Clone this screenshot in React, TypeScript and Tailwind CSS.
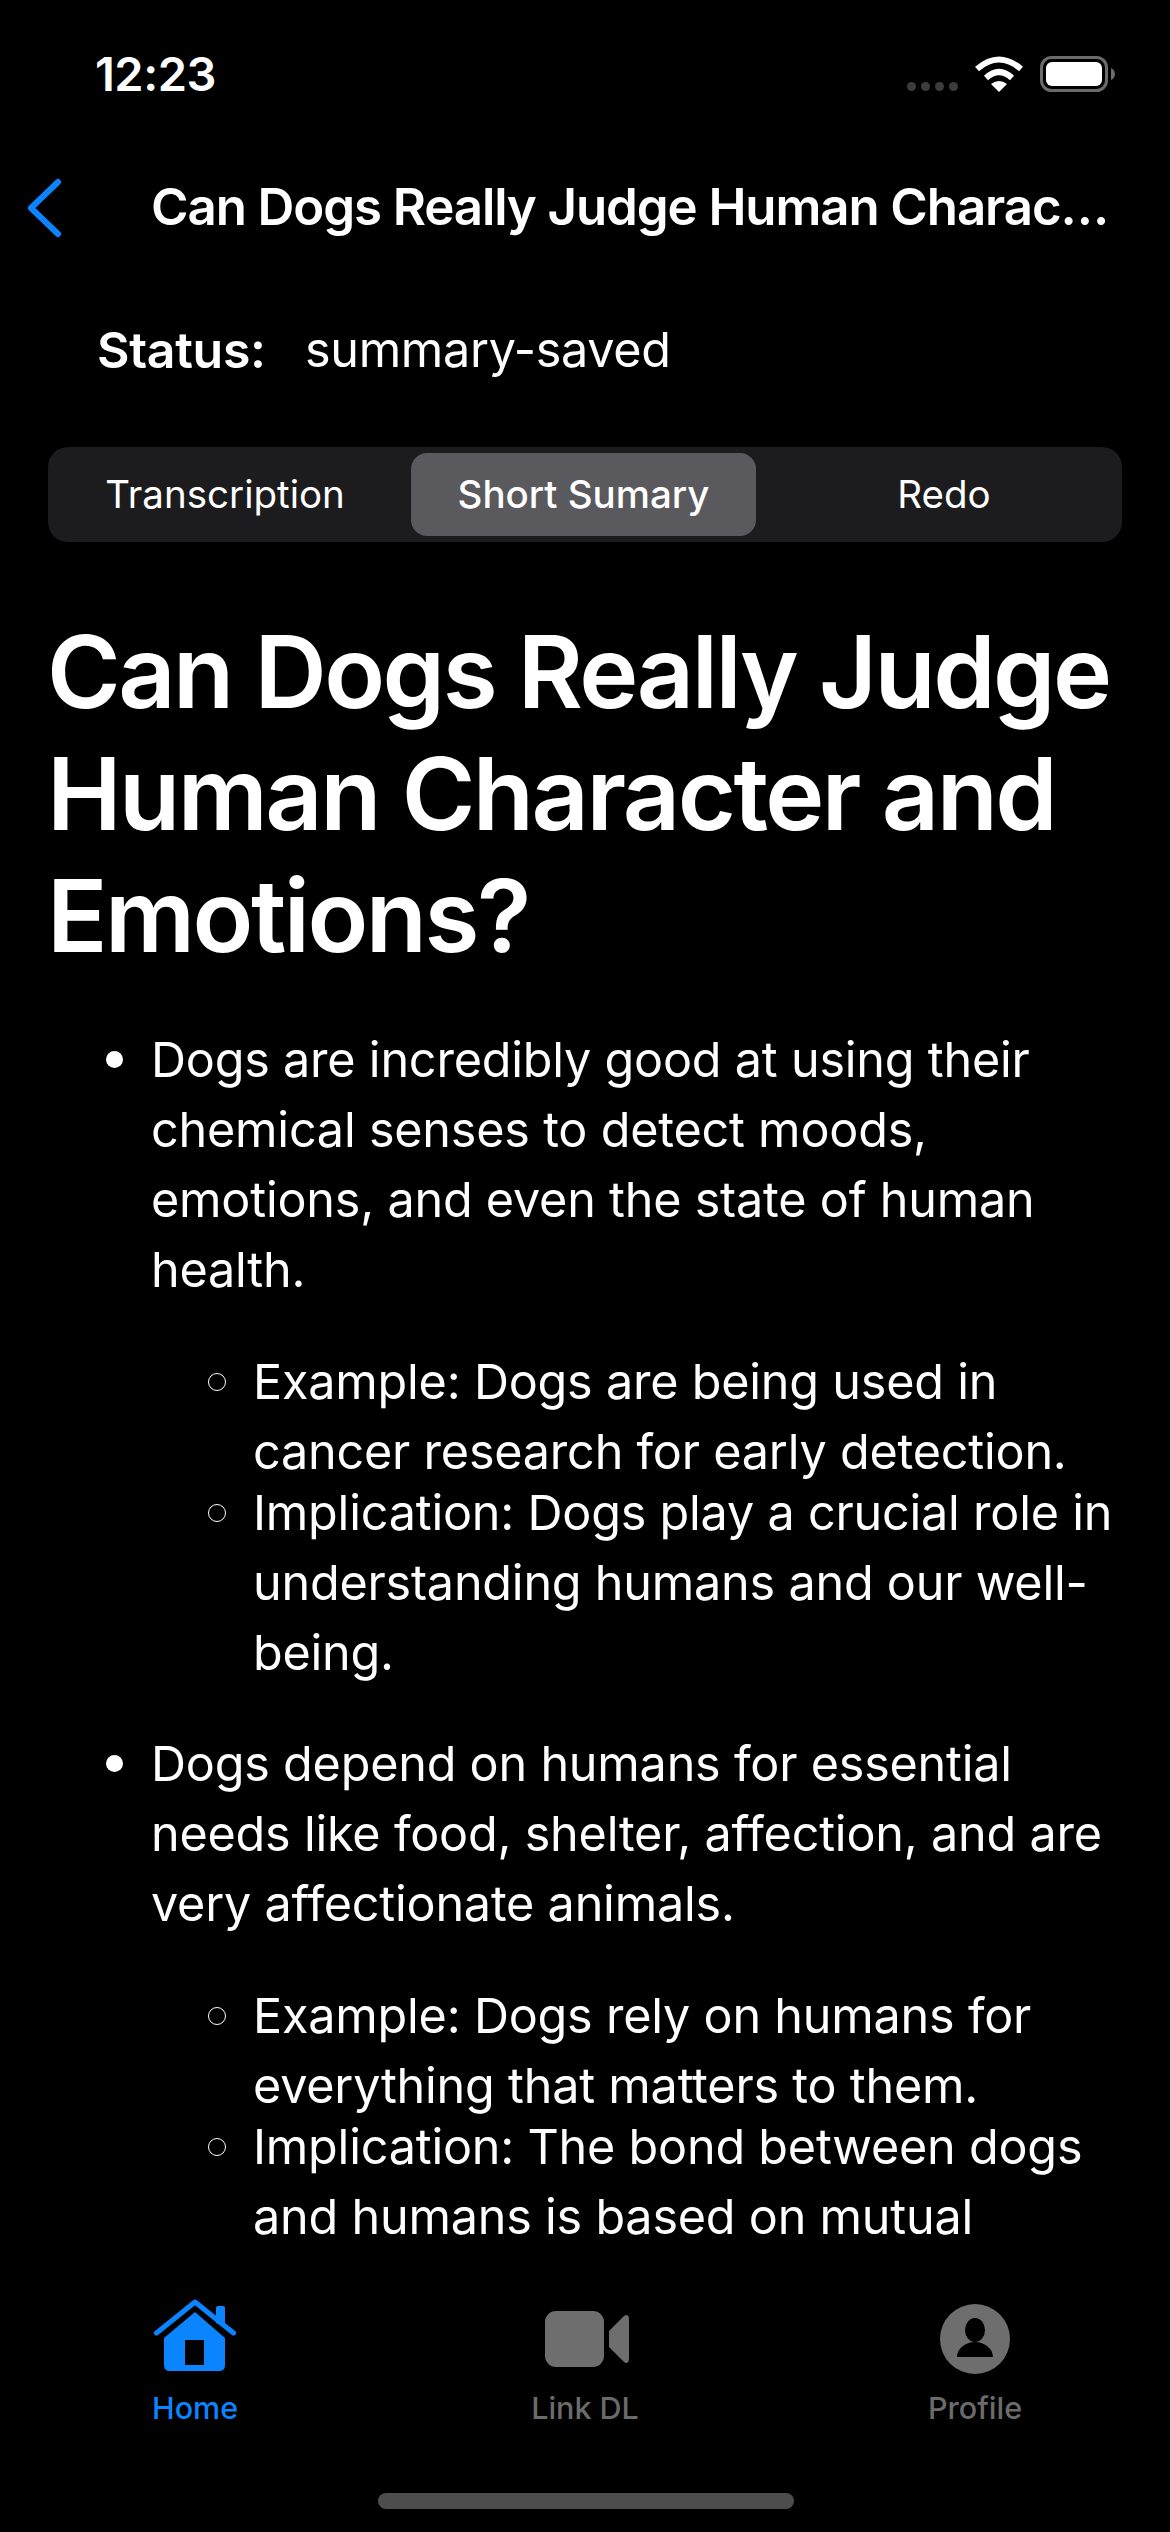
import React from 'react';

const SECTIONS = [
  {
    text: 'Dogs are incredibly good at using their chemical senses to detect moods, emotions, and even the state of human health.',
    subs: [
      'Example: Dogs are being used in cancer research for early detection.',
      'Implication: Dogs play a crucial role in understanding humans and our well-being.',
    ],
  },
  {
    text: 'Dogs depend on humans for essential needs like food, shelter, affection, and are very affectionate animals.',
    subs: [
      'Example: Dogs rely on humans for everything that matters to them.',
      'Implication: The bond between dogs and humans is based on mutual respect and love.',
    ],
  },
];

const StatusBar = () => (
  <div className="flex h-[148px] shrink-0 items-center justify-between pl-[95px] pr-[55px]">
    <span className="text-[47px] font-semibold tracking-[-0.5px]">12:23</span>
    <div className="flex items-center">
      <div className="mr-[17px] mt-[24px] flex gap-[5px]">
        <span className="h-[9px] w-[9px] rounded-full bg-[#3c3c3c]" />
        <span className="h-[9px] w-[9px] rounded-full bg-[#3c3c3c]" />
        <span className="h-[9px] w-[9px] rounded-full bg-[#3c3c3c]" />
        <span className="h-[9px] w-[9px] rounded-full bg-[#3c3c3c]" />
      </div>
      <svg width="48" height="36" viewBox="0 0 48 36" fill="none" stroke="#fff" strokeWidth="6">
        <path d="M2 13 Q24 -6 46 13" />
        <path d="M11 22 Q24 10 37 22" />
        <path d="M24 36 L16 28 Q24 22 32 28 Z" fill="#fff" stroke="none" />
      </svg>
      <svg className="ml-[17px]" width="75" height="36" viewBox="0 0 75 36" fill="none">
        <rect x="1.5" y="1.5" width="65" height="33" rx="10" stroke="#6b6b6b" strokeWidth="3" />
        <rect x="6" y="6" width="56" height="24" rx="6" fill="#fff" />
        <path d="M71 12 Q75 14 75 18 Q75 22 71 24 Z" fill="#6b6b6b" />
      </svg>
    </div>
  </div>
);

const NavBar = () => (
  <div className="flex h-[120px] shrink-0 items-center">
    <svg className="ml-[25px]" width="38" height="60" viewBox="0 0 38 60" fill="none">
      <path d="M33 4 L6 30 L33 56" stroke="#0a84ff" strokeWidth="6" strokeLinecap="round" strokeLinejoin="round" />
    </svg>
    <span className="mb-[2px] ml-[88px] w-[966px] truncate text-[51px] font-semibold tracking-[-1.1px]">
      Can Dogs Really Judge Human Character and Emotions?
    </span>
  </div>
);

const Segments = () => (
  <div className="mx-[48px] flex h-[95px] shrink-0 items-center rounded-[20px] bg-[#1c1c1e] pl-[6px] text-[38.5px]">
    <div className="flex w-[342px] items-center justify-center">Transcription</div>
    <div className="ml-[15px] flex h-[83px] w-[345px] items-center justify-center rounded-[16px] bg-[#5a5a5e] font-medium">
      Short Sumary
    </div>
    <div className="flex flex-1 items-center justify-center pl-[10px]">Redo</div>
  </div>
);

const TabItem = ({ label, active, icon }: { label: string; active?: boolean; icon: React.ReactNode }) => (
  <div className="flex w-[390px] flex-col items-center">
    <div className="flex h-[80px] items-center justify-center">{icon}</div>
    <span className={active ? 'mt-[6px] text-[30.5px] font-medium text-[#0a84ff]' : 'mt-[6px] text-[30.5px] font-medium text-[#6b6b6b]'}>
      {label}
    </span>
  </div>
);

const HomeIcon = () => (
  <svg className="mb-[8px]" width="82" height="72" viewBox="0 0 82 72" fill="none">
    <path d="M2.5 34 L41 3 L79.5 34" stroke="#0a84ff" strokeWidth="5" strokeLinecap="round" strokeLinejoin="round" />
    <rect x="62" y="7" width="9" height="18" rx="2" fill="#0a84ff" />
    <path
      fillRule="evenodd"
      clipRule="evenodd"
      d="M41 13 L71 39 V66 Q71 72 65 72 H16 Q10 72 10 66 V39 Z M31 41 V66 H50 V41 Z"
      fill="#0a84ff"
    />
  </svg>
);

const VideoIcon = () => (
  <svg className="ml-[4px]" width="84" height="56" viewBox="0 0 84 56" fill="#6e6e6e">
    <rect x="0" y="0" width="59" height="56" rx="11" />
    <path d="M64 20 L79 5 Q84 2 84 9 V47 Q84 54 79 51 L64 36 Z" />
  </svg>
);

const ProfileIcon = () => (
  <svg width="70" height="70" viewBox="0 0 70 70">
    <path
      fillRule="evenodd"
      clipRule="evenodd"
      fill="#6e6e6e"
      d="M35 0 A35 35 0 1 1 35 70 A35 35 0 1 1 35 0 Z M35 14 A10 12 0 1 0 35 38 A10 12 0 1 0 35 14 Z M17 53 H53 C53 45 45 38 35 38 C25 38 17 45 17 53 Z"
    />
  </svg>
);

const App = () => {
  return (
    <div className="flex h-[2532px] w-[1170px] flex-col overflow-hidden bg-black font-['Inter',sans-serif] text-white">
      <StatusBar />
      <NavBar />
      <div className="mt-[41px] flex h-[82px] shrink-0 items-center pl-[97px] text-[48.5px] tracking-[-0.3px]">
        <span className="w-[208px] text-[50px] font-semibold">Status:</span>
        <span>summary-saved</span>
      </div>
      <div className="mt-[56px]">
        <Segments />
      </div>
      <div className="min-h-0 flex-1 overflow-hidden px-[50px]">
        <h1 className="-ml-[3px] mt-[69px] text-[100px] font-semibold leading-[122px] tracking-[-2.5px]">
          Can Dogs Really Judge Human Character and Emotions?
        </h1>
        <ul className="mt-[48px] pl-[101px] text-[48.5px] leading-[70px] tracking-[-0.2px]">
          {SECTIONS.map((section) => (
            <li
              key={section.text}
              className="relative mb-[50px] before:absolute before:left-[-45px] before:top-[26px] before:h-[17px] before:w-[17px] before:rounded-full before:bg-white before:content-['']"
            >
              {section.text}
              <ul className="mt-[42px] pl-[102px]">
                {section.subs.map((sub) => (
                  <li
                    key={sub}
                    className="relative -mb-[9px] before:absolute before:left-[-45px] before:top-[26px] before:h-[18px] before:w-[18px] before:rounded-full before:border-[1.5px] before:border-white before:content-['']"
                  >
                    {sub}
                  </li>
                ))}
              </ul>
            </li>
          ))}
        </ul>
      </div>
      <div className="relative h-[290px] shrink-0 bg-black">
        <div className="flex justify-center pt-[57px]">
          <TabItem label="Home" active icon={<HomeIcon />} />
          <TabItem label="Link DL" icon={<VideoIcon />} />
          <TabItem label="Profile" icon={<ProfileIcon />} />
        </div>
        <div className="absolute bottom-[23px] left-[378px] h-[16px] w-[416px] rounded-full bg-[#4d4d4d]" />
      </div>
    </div>
  );
};

export default App;
